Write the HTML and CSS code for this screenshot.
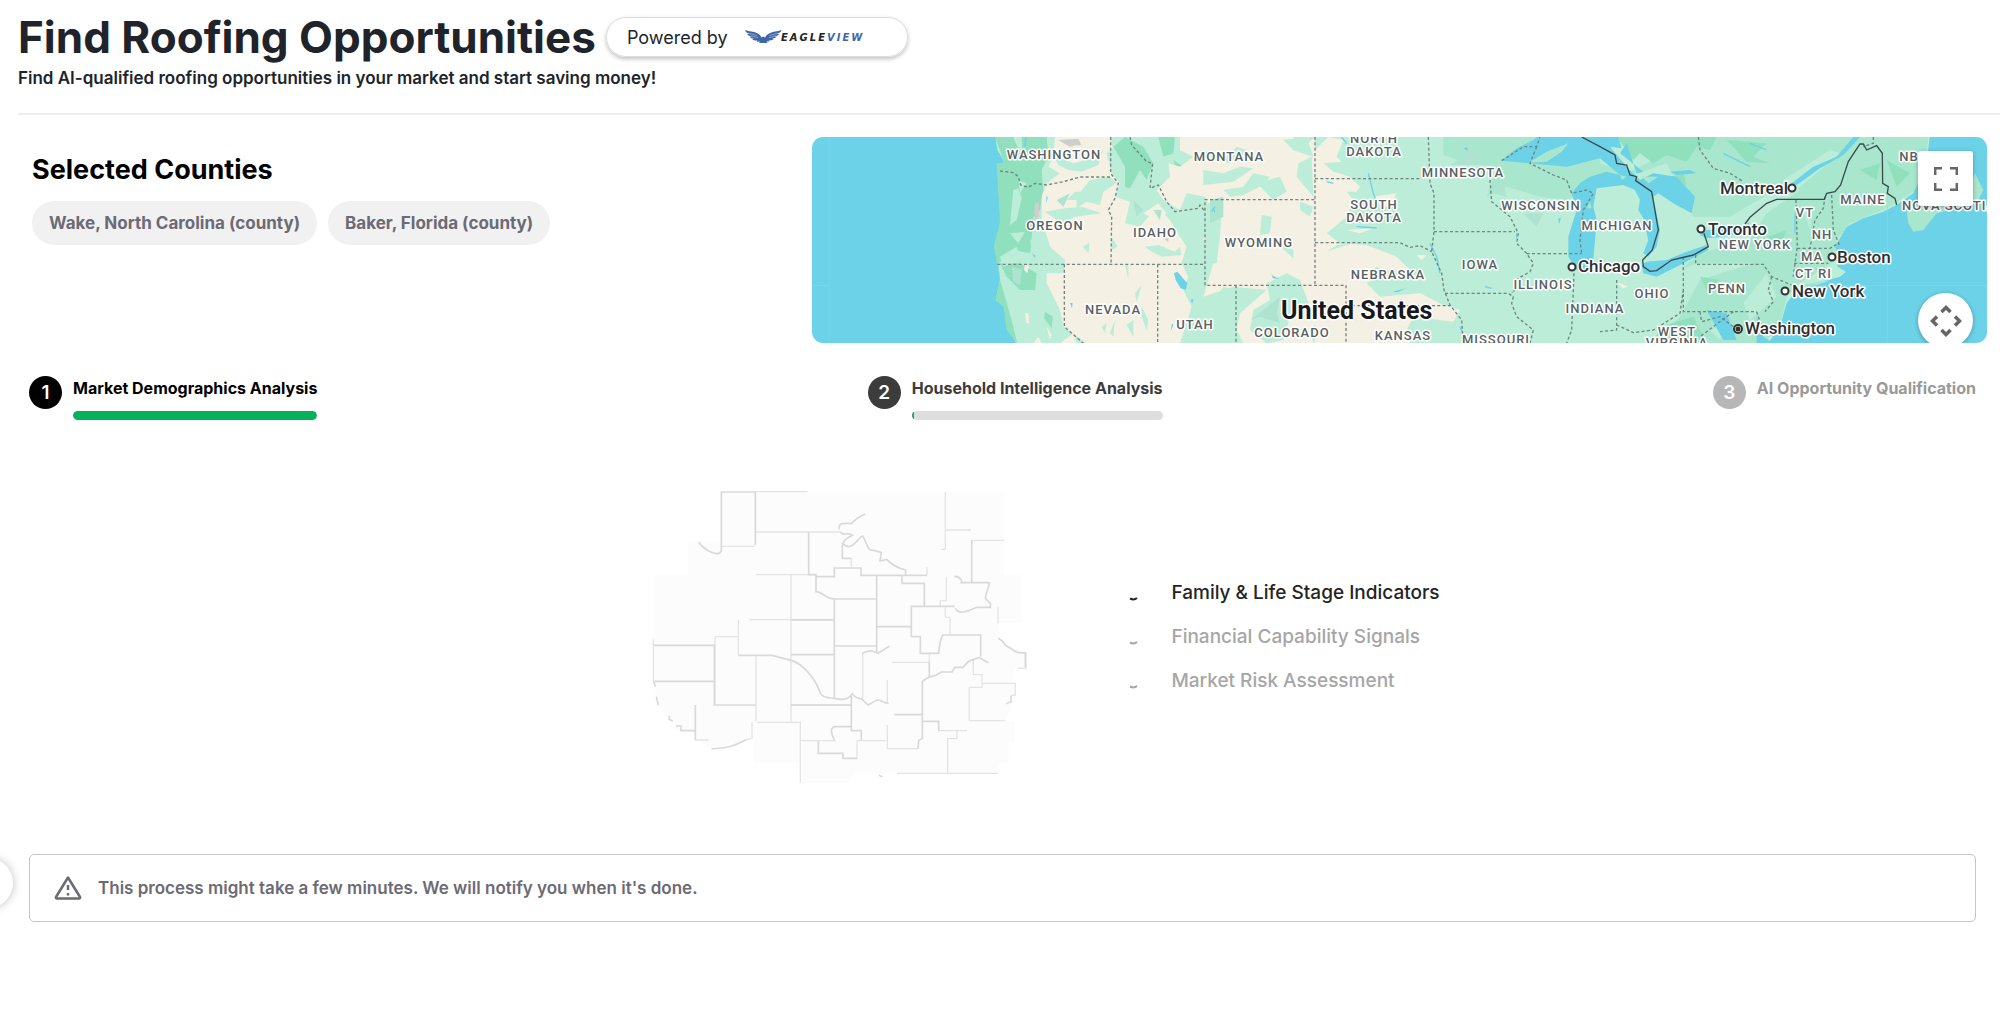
FILE: index.html
```html
<!DOCTYPE html>
<html lang="en">
<head>
<meta charset="utf-8">
<meta name="viewport" content="width=device-width, initial-scale=1">
<title>Find Roofing Opportunities</title>
<link rel="stylesheet" href="styles.css">
</head>
<body>
<header class="page-header">
  <div class="title-row">
    <h1>Find Roofing Opportunities</h1>
    <div class="powered">
      <span>Powered by</span>
      <svg class="logo" viewBox="0 0 134 16" width="134" height="16" role="img" aria-label="EagleView">
        <path fill="#3f67a8" d="M0 1 C4 2.500 9 2.500 13 4.500 Q15.500 6 16.500 8.500 L18 7.500 L20 8.500 Q21 6 24 4.500 C28 2.500 32 2.500 36.500 1 Q36 3.500 32 4.800 L34.500 4.800 Q33 7 29.500 7.400 L32 7.600 Q30 9.500 27 9.600 L29 10 Q26 11.800 23.500 11.500 L24.500 12.500 L21.500 12.500 L22.500 14 H14 L15 12.500 L11.500 12.800 L12.500 11.500 Q9 12 7 10.200 L9.500 9.800 Q6 9.700 4.500 7.800 L7 7.600 Q3.500 7.200 2 5 L4.500 5 Q.5 3.500 0 1Z"/>
        <path stroke="#fff" stroke-width=".4" fill="none" d="M3 4.200l9 2.200M6 7l7 1.500M33.500 4.200l-9 2.200M31 7l-7 1.500"/>
        <text x="36" y="12" class="logo-text">EAGLE<tspan class="logo-view">VIEW</tspan></text>
      </svg>
    </div>
  </div>
  <p>Find AI-qualified roofing opportunities in your market and start saving money!</p>
</header>

<main>
  <section class="overview">
    <div class="counties">
      <h2>Selected Counties</h2>
      <ul class="chips">
        <li>Wake, North Carolina (county)</li>
        <li>Baker, Florida (county)</li>
      </ul>
    </div>
    <div class="map">
      <svg class="map-canvas" viewBox="0 0 1175 206" preserveAspectRatio="xMidYMid slice" role="img" aria-label="Map of the United States">
        <rect width="1175" height="206" fill="#6bd2e8"/>
        <g transform="translate(-12 -7) scale(.33333)">
          <path fill="#bbedd8" d="M585 15L592 60 610 90 600 180 600 280 582 350 595 400 600 450 587 510 612 530 620 590 652 645H2900L2940 590 2960 520 2990 480 3040 462 3120 440 3138 425 3112 410 3115 380 3105 350 3140 290 3190 265 3250 245 3290 225 3340 190 3380 100 3390 15Z"/>
          <!-- Eastern woodland -->
          <path fill="#a8e6cd" d="M1930 21H2400V100L2480 130 2700 21H3385L3375 110 3340 185 3260 235 3150 280 3110 330 3095 400 3000 460 2960 500 2940 590 2890 640H2560L2640 560 2700 450 2860 400 2690 400 2640 420 2700 370 2850 330 2900 250 3000 180 2960 160 2790 260 2680 260 2600 100 2400 170 2300 210 2220 200 2120 170 2060 200 2090 110 2000 100 1930 75Z"/>
          <path fill="#bbedd8" d="M2200 30L2290 21 2240 80ZM2420 190L2500 170 2520 220 2500 265 2410 260ZM2830 520L2900 430 2930 500 2850 570ZM2730 600L2790 580 2760 630ZM3010 240L3040 230 3030 300ZM2950 150L3090 60 3120 70 2990 180Z"/>
          <path fill="#90e0bd" d="M2450 21H2750L2730 60 2690 50 2660 95 2600 75 2560 100 2520 70 2500 90ZM2780 30L2900 40 2860 80 2910 100 2840 95ZM2580 150L2650 130 2660 165ZM3180 120L3240 100 3230 150ZM3260 90L3330 130 3290 170ZM2580 590L2680 560 2720 640H2560ZM2700 440L2760 450 2720 480ZM2900 320L2960 300 2940 350Z"/>
          <!-- Pacific ranges -->
          <path fill="#90e0bd" d="M585 21H640L660 70 650 100 670 130 665 21H740L745 80 725 120 730 180 720 240 700 260 690 370 640 360 610 390 595 400 600 450 615 500 640 590 652 640 620 600 612 530 587 510 600 450 582 350 600 280 600 180 610 90ZM600 400L660 400 710 430 705 480 660 480 620 440ZM735 545L758 560 755 595 732 565ZM940 50L975 21 1030 50 1060 100 1040 150 1020 120 990 175 975 170 975 110ZM1075 21H1125L1120 70 1090 80ZM1120 90L1150 110 1140 150Z"/>
          <path fill="#90e0bd" d="M590 100L670 90 725 120 725 190 700 250 690 370 650 350 595 395 582 350 600 280Z"/>
          <path fill="#bbedd8" d="M640 180L655 175 665 205 650 270 630 285ZM630 310L675 305 655 340ZM690 330L740 350 760 390 700 380ZM600 380L650 350 665 390 610 410ZM655 150L660 190 680 160Z"/>
          <!-- Dry plains and basins -->
          <path fill="#f5f0e4" d="M765 21H930L938 55 920 70 935 130 960 160 945 200 990 215 975 280 1020 290 1070 230 1110 270 1140 320 1160 350 1145 400 1165 440 1150 480 1175 530 1160 580 1140 640H860L790 590 780 540 740 460 740 430 790 430 795 390 750 350 735 300 725 270 725 200 740 160 780 130 745 110 760 80ZM1090 210L1070 180 1110 140 1105 100 1140 110 1180 80 1140 60V21H1480L1500 60 1545 21V640H1330L1310 600 1320 550 1400 480 1300 470 1210 500 1240 400 1210 330 1230 260 1215 200 1160 190 1140 240ZM1545 60L1585 21 1630 30 1610 80 1625 95 1570 100 1600 125 1650 140 1680 170 1670 185 1640 185 1660 210 1640 260 1580 310 1620 340 1700 345 1790 380 1840 430 1760 420 1700 460 1740 500 1860 490 1930 525 1980 540 1960 575 1840 560 1820 600 1830 640H1545ZM1850 375L1880 375 1865 390Z"/>
          <path fill="#bbedd8" d="M760 75l60 25 60-15 30-25-15 45-50 20-40-5-30-15zM830 200l40-50 60-10 20 20-40 25-10 40-40-10-30 20zM735 245l60-10 50-5 60 20-80 10-40 20zM800 210l25-25 50 0-30 25zM848 350l20-12-2 32zM935 320l18 30-18 10zM1035 350l40-5 50 20 15-15 5 25-60 5-30-15zM1200 60l80 20 30-30 30 10-50 40-70-15zM1210 120l60 10 50-20 40 5-60 40-90 10zM1270 180l60-10 30-40 50 10-20 25-60 30-40 5zM1370 160l70-20 20 45-40 25zM1385 255l30 5-5 50-30 5zM1420 330l60 30 0 25zM1450 30l70-9 20 60-60-20zM1495 100l40-20 5 120-50-60zM1500 215l40 15-10 30-30-20zM1215 210l50 40-5 70-10 80-35 0zM1400 460l60-30 40 20 30 80-60 30-20 70-50 10-50-40 10-60 50-30zM1545 580l-15 40 15 20zM1580 365l30-20 50-5-50 15zM1680 440l50-30 80 30-50 20zM975 403l10 5 0 40-8-35zM1005 490l20-25-15 50zM905 590l15-10-5 30zM930 610l15-40-5 50zM980 585l20-15 0 50zM1025 530l20 40-5 30-15-40zM960 530l-15 20 20-5zM1270 470l30 10-20 30-30-10z"/>
          <path fill="#f5f0e4" d="M675 550l10 0 2 30-8 0zM675 400l12 10-5 20-10-10zM740 590l15 25-5 15zM700 640l15-20 10 20zM780 640l40-30 10 30zM1030 250l45-30 25 30-30 20zM1590 150l50 10-20 20zM1720 200l70-10-20 40-30-5zM1640 300l80-5-40 15zM2445 455l40 15-15 5zM1090 175l30 20-10 20z"/>
          <path fill="#ccd0cc" d="M775 30l60-4 10 20-20 0-15 5zM705 220l12-5 0 45-15 10zM1090 325l15 0 0 12z"/>
          <path fill="#aee3cf" d="M635 410l30 10-5 45-20-10zM1440 500l-10 50 10 30-60-20-30 10 40-30zM1230 210l40-10 0 60-40 20zM1960 40l40 35-50 30 80 0 20-30zM2080 190l30-30 10 40zM2170 250l60 0-20 40zM1060 240l25 0-5 30zM1000 210l30 30-20 20zM770 210l40-20-20 40z"/>
          <!-- Lakes and inlets -->
          <path fill="#6bd2e8" d="M2105 92L2150 55 2200 30 2210 21H2455L2465 55 2430 50 2480 110 2520 150 2560 130 2630 140 2685 200 2675 250 2620 220 2575 190 2560 200 2580 300 2570 350 2545 380 2530 370 2545 330 2530 265 2515 240 2520 210 2505 180 2470 165 2390 175 2380 230 2390 270 2380 390 2355 425 2330 420 2305 380 2305 320 2330 240 2315 190 2340 160 2370 140 2420 125 2460 135 2400 85 2300 110 2190 100ZM2525 405L2540 395 2600 390 2660 365 2720 345 2725 360 2640 405 2570 440 2530 430ZM2700 315L2720 300 2830 290 2850 275 2840 300 2790 318 2720 325ZM2975 160L3040 110 3110 80 3160 21H3180L3130 75 3060 115 2990 165ZM675 21l5 0-2 25-6 5zM1122 430l10-5 30 35-5 20-15-5-15-25zM1116 580l4 5-8 18zM810 518l8 2-2 15zM740 195l3 10-5 15zM697 370l10 8-3 6zM1172 510l8-3-3 15zM1408 420l6 15 25 12-20-2zM1240 240l5 0 0 10zM1990 55l12-3 2 12zM1778 485l40-10-25 12zM2275 265l8 0-6 18zM2530 125l-70-55 20-30 30 90zM2610 125l60-5 20 10-60 5zM2720 540l60 10 30 80-40 0zM2870 560l20 60 30 20-50 0z"/>
          <path fill="#a8e6cd" d="M2185 98L2240 65 2305 40 2285 65 2240 95ZM2460 135l20 5-15 10zM2525 140l50 0-30 20zM2360 235l10-20 5 20zM2990 468L3070 452 3090 452 3020 475ZM3320 245L3360 225 3500 200 3525 130 3550 180 3530 220 3410 250 3370 300 3340 305 3325 280Z"/>
          <path stroke="#6bd2e8" stroke-width="4" fill="none" d="M1890 340l20 40 10 50M1705 130l15 60 10 25M1625 21l15 20M2150 310l0 15M2055 470l20 5M2145 480l-10 8M1980 590l8 20M2850 110l-80-40M2900 60l-50-20M2985 250l0 60M1245 230l-10 15M1580 155l20 5M1670 290l60 4"/>
          <path stroke="#87daeb" stroke-width="2" fill="none" d="M87 21V640M36 466H87M3262 230V640M3000 466H3562"/>
          <path class="state-line" d="M600 123L640 128 655 140 662 165 685 172 705 160 740 165 790 155 840 141H935M932 21V130L955 160 945 205 925 240 935 260 933 402M592 403H1213M793 403V590L850 640M1073 403V640M990 21L995 45 1040 95 1058 100 1050 175 1075 165 1100 215 1125 245 1195 235 1200 225 1215 245M1543 209H1215V466H1638V640M1308 466V640M1545 21V466M1545 146H1865M1545 338H1800L1830 352 1860 347 1895 365M1885 21L1890 160 1902 190V305L1895 365 1925 430 1932 480 1950 525 1985 570 1990 640M1902 305H2145M1640 527H1950M1935 490H2125L2140 500 2135 520 2150 560 2200 600 2190 640M2070 150L2075 215 2130 260 2155 310 2150 340 2180 370 2200 400 2190 425 2155 445 2140 490M2180 371H2345M2105 92L2170 50 2210 50 2220 21M2210 50L2190 100 2260 135 2300 150 2315 190 2360 180 2380 190 2350 240 2340 330 2345 371M2322 430L2315 600 2300 640M2450 450V600L2400 605M2650 380V545H2870M2687 375V403H2890L2915 440 2975 465M2915 440L2905 480 2920 515 2895 545M2450 585L2500 608 2560 600 2640 550 2650 480M2700 545L2705 575 2760 560 2800 590M2800 545L2760 575 2700 620M2870 545L2885 590M2988 210L2992 350 2985 400 2980 440M3075 200L3070 235 3045 270 3030 355M2992 355H3090L3115 340M2983 400H3085M3095 195L3100 300 3118 345M2695 21L2700 60 2740 115 2790 130 2830 155M3220 21V40L3190 50"/>
          <path class="country-line" d="M2345 21L2400 50 2445 75 2450 100 2480 105 2490 135 2510 140 2507 152 2555 185 2575 300 2557 360 2528 390 2530 410 2550 424 2570 422 2615 390 2680 375 2725 350 2712 310M2835 282L2850 262 2900 220 2930 208H3073L3080 190 3105 185 3122 165 3145 95 3180 42 3190 42 3200 60 3230 47 3247 70 3248 160 3265 170 3262 190 3285 205 3290 225"/>
        </g>
        <g class="state-label">
          <text x="242" y="22">WASHINGTON</text><text x="243" y="93">OREGON</text><text x="343" y="100">IDAHO</text>
          <text x="417" y="24">MONTANA</text><text x="562" y="6">NORTH</text><text x="562" y="19">DAKOTA</text>
          <text x="562" y="72">SOUTH</text><text x="562" y="85">DAKOTA</text><text x="447" y="110">WYOMING</text>
          <text x="301" y="177">NEVADA</text><text x="383" y="192">UTAH</text><text x="480" y="200">COLORADO</text>
          <text x="576" y="142">NEBRASKA</text><text x="591" y="203">KANSAS</text><text x="651" y="40">MINNESOTA</text>
          <text x="729" y="73">WISCONSIN</text><text x="668" y="132">IOWA</text><text x="731" y="152">ILLINOIS</text>
          <text x="684" y="207">MISSOURI</text><text x="805" y="93">MICHIGAN</text><text x="783" y="176">INDIANA</text>
          <text x="840" y="161">OHIO</text><text x="915" y="156">PENN</text><text x="865" y="199">WEST</text>
          <text x="865" y="210">VIRGINIA</text><text x="943" y="112">NEW YORK</text><text x="993" y="80">VT</text>
          <text x="1010" y="102">NH</text><text x="1000" y="124">MA</text><text x="992" y="141">CT</text>
          <text x="1013" y="141">RI</text><text x="1051" y="67">MAINE</text><text x="1097" y="24">NB</text>
          <text x="1137" y="73">NOVA SCOTIA</text>
        </g>
        <g class="city-label">
          <text x="908" y="57">Montreal</text><text x="896" y="98">Toronto</text><text x="766" y="135">Chicago</text>
          <text x="1025" y="126">Boston</text><text x="980" y="160">New York</text><text x="933" y="197">Washington</text>
        </g>
        <g class="city-dot">
          <circle cx="980" cy="51" r="3.500"/><circle cx="889" cy="92" r="3.500"/><circle cx="760" cy="130" r="3.500"/>
          <circle cx="1020" cy="120" r="3.500"/><circle cx="973" cy="154" r="3.500"/><circle cx="926" cy="192" r="4"/>
          <circle cx="926" cy="192" r="1.500" fill="#202124"/>
        </g>
        <text class="country-label" x="469" y="182">United States</text>
      </svg>
      <button class="map-fullscreen" type="button" aria-label="Toggle fullscreen view">
        <svg viewBox="0 0 24 24" width="24" height="24"><path fill="none" stroke="#666" stroke-width="2.500" d="M1.200 8V1.200H8M16 1.200h6.800V8M22.800 16v6.800H16M8 22.800H1.200V16"/></svg>
      </button>
      <button class="map-camera" type="button" aria-label="Map camera controls">
        <svg viewBox="0 0 32 32" width="32" height="32"><path fill="none" stroke="#666" stroke-width="3.500" d="M11.500 7L16 2.500l4.500 4.500M11.500 25L16 29.500l4.500-4.500M7 11.500L2.500 16l4.500 4.500M25 11.500L29.500 16l-4.500 4.500"/></svg>
      </button>
    </div>
  </section>

  <ol class="steps">
    <li class="step done">
      <span class="step-number">1</span>
      <div class="step-body"><label for="step-1">Market Demographics Analysis</label><progress id="step-1" max="100" value="100"></progress></div>
    </li>
    <li class="step active">
      <span class="step-number">2</span>
      <div class="step-body"><label for="step-2">Household Intelligence Analysis</label><progress id="step-2" max="100" value="1"></progress></div>
    </li>
    <li class="step pending">
      <span class="step-number">3</span>
      <div class="step-body"><span>AI Opportunity Qualification</span></div>
    </li>
  </ol>

  <section class="analysis">
    <svg class="county-map" viewBox="40 30 1125 880" role="img" aria-label="County outlines">
      <path fill="#fcfcfc" d="M248 35H1095V285H1150V428H1080V480L1162 520V565H1125V610L1130 650 1100 725H1128V790H1110V850H1080V880H650L625 908H485V850H345V780L220 806 170 780V752H112L60 680 44 600V285H148V187H248Z"/>
      <g fill="none" stroke="#e4e4e4" stroke-width="4">
        <path d="M350 35H507M350 156H607M248 199H348M352 284H530M332 419H587M457 284V725M352 527V725M299 420V470H229M229 472V675M299 470V526M457 675H637M355 727H485V908M340 727V775L322 779M170 780H210M485 782H590M655 782H740M655 782V835H615M672 518V655M746 600V670M746 735V806H838M760 547H872M920 150H997M1000 181H1097M920 36V208H908M923 290V362H905V377M934 412V464M920 380V412H934M1078 382V430M1004 540V584H1030V622H992V722H1100M1030 610H1130V645L1117 647M900 752H985M955 752V776H927V880M775 880H1078M44 478V605M1138 565H1162V520M638 235V262M865 262V285M872 520V585"/>
      </g>
      <g fill="none" stroke="#d9d9d9" stroke-width="5">
        <path d="M248 215V36H350V196M510 156V284H532V335C550 335 560 355 587 357H712M532 290H587V264H667V286H865M714 287V520M587 357V655M587 498H714M457 420H587M457 524H587M714 440H818M790 288V310H857V378M818 470V379H948M818 470H845V520H900Q905 470 914 465H1026V530M44 496H227V604H44M227 604V675H350M170 675V780M170 752H127V738H112M299 526H400L457 541C500 552 535 610 542 632C548 655 570 652 590 656C615 660 628 660 641 641Q650 655 668 656L688 675C700 670 710 660 718 660S735 670 750 670M457 675H637M638 645V752H668V782M637 740H590C570 742 580 765 588 782M539 783V820H613V835H655M672 520C690 510 700 510 718 520L752 499M767 704H851M851 704V605C865 590 880 590 893 585L908 576H940L948 562H973C985 550 985 542 1005 538L1022 533 1049 548M851 700V775L840 782 838 806M851 724H900V752M999 307V181M965 308H1052C1052 325 1035 345 1042 358L1055 370V382H1015C985 395 960 405 950 385M947 289Q968 290 970 307M180 186C200 215 240 230 247 214M218 806C270 808 300 790 322 779M601 148C600 125 620 130 638 131C650 118 665 108 680 102M607 156C610 170 630 155 642 166C610 180 605 195 630 200C650 200 660 170 672 168C684 185 685 215 705 211L728 217 724 243 744 238C760 255 780 265 801 270V284M611 190V235H638M1079 475C1100 485 1095 500 1117 505C1130 520 1145 520 1160 518V562M1117 647V665L1103 671M45 605L50 620M53 650L59 676M92 708V718L102 723M720 885L731 891M872 545V590"/>
      </g>
    </svg>
    <ul class="signals">
      <li class="current"><svg viewBox="0 0 10 20" width="10" height="20"><path d="M1 15.500q4 2 7-.5"/></svg>Family &amp; Life Stage Indicators</li>
      <li><svg viewBox="0 0 10 20" width="10" height="20"><path d="M1 15.500q4 2 7-.5"/></svg>Financial Capability Signals</li>
      <li><svg viewBox="0 0 10 20" width="10" height="20"><path d="M1 15.500q4 2 7-.5"/></svg>Market Risk Assessment</li>
    </ul>
  </section>

  <div class="notice" role="status">
    <svg viewBox="0 0 28 26" width="28" height="26" fill="none" stroke="#6b6a75" stroke-width="2.500" stroke-linejoin="round"><path d="M14 2.500L26 22q.5 1.500-1 1.500H3q-1.500 0-1-1.500Z"/><path d="M14 10v5M14 18v2.500"/></svg>
    <p>This process might take a few minutes. We will notify you when it's done.</p>
    <button class="drawer-handle" type="button" aria-label="Open side panel"></button>
  </div>
</main>
</body>
</html>
```
FILE: styles.css
```css
* { box-sizing: border-box; }

body {
  margin: 0;
  overflow-x: hidden;
  background: #fff;
  color: #20242a;
  font-family: Inter, "Liberation Sans", sans-serif;
}

h1, h2, p, ul, ol { margin: 0; padding: 0; }
ul, ol { list-style: none; }

.page-header {
  margin-left: 18px;
  padding: 13px 0 23px;
  border-bottom: 2px solid #eee;
}

.title-row {
  display: flex;
  align-items: center;
  gap: 10px;
}

h1 {
  font-size: 44px;
  line-height: 48px;
  font-weight: 700;
}

.page-header p {
  margin-top: 5px;
  font-size: 17px;
  line-height: 24px;
  font-weight: 600;
}

.powered {
  display: flex;
  align-items: center;
  gap: 17px;
  height: 40px;
  padding: 0 28px 0 20px;
  border: 1px solid #ddd;
  border-radius: 20px;
  box-shadow: 0 2px 4px rgba(0, 0, 0, .25);
  font-size: 18px;
}

.logo-text {
  fill: #222;
  font: italic 700 10px "DejaVu Sans", "Liberation Sans", sans-serif;
  letter-spacing: 2px;
}

.logo-view { fill: #3f67a8; }

.overview {
  display: grid;
  grid-template-columns: 780fr 1175fr;
  padding: 22px 13px 0 32px;
}

.counties { padding-top: 17px; }

h2 {
  color: #000;
  font-size: 27px;
  line-height: 32px;
  font-weight: 700;
}

.chips {
  display: flex;
  flex-wrap: wrap;
  gap: 11px;
  margin-top: 15px;
}

.chips li {
  padding: 0 17px;
  border-radius: 22px;
  background: #f1f1f1;
  color: #6b6a75;
  font-size: 17px;
  line-height: 44px;
  font-weight: 700;
}

.map {
  position: relative;
  height: 206px;
  overflow: hidden;
  border-radius: 11px;
}

.map-canvas {
  display: block;
  width: 100%;
  height: 100%;
}

.state-line {
  fill: none;
  stroke: #6f8580;
  stroke-width: 4;
  stroke-dasharray: 9 7;
}

.country-line {
  fill: none;
  stroke: #3c4a4c;
  stroke-width: 4;
}

.state-label, .city-label, .country-label {
  font-family: Roboto, sans-serif;
  font-weight: 500;
  paint-order: stroke;
  stroke: #fff;
  stroke-width: 3px;
  stroke-linejoin: round;
}

.state-label {
  fill: #5a5f63;
  font-size: 13px;
  letter-spacing: 1px;
  text-anchor: middle;
}

.city-label {
  fill: #2c3033;
  font-size: 17px;
}

.country-label {
  fill: #17191b;
  font-size: 25px;
  font-weight: 700;
}

.city-dot {
  fill: #fff;
  stroke: #333;
  stroke-width: 2px;
}

.map-fullscreen, .map-camera {
  position: absolute;
  right: 14px;
  display: grid;
  place-items: center;
  width: 55px;
  height: 55px;
  padding: 0;
  border: 0;
  background: #fff;
  box-shadow: 0 1px 4px rgba(0, 0, 0, .3);
}

.map-fullscreen { top: 14px; border-radius: 3px; }
.map-camera { bottom: -5px; border-radius: 50%; }

.steps {
  display: flex;
  justify-content: space-between;
  margin: 33px 24px 0 29px;
}

.step {
  display: flex;
  align-items: flex-start;
  gap: 11px;
  font-size: 16px;
  line-height: 24px;
  font-weight: 700;
}

.step-number {
  width: 33px;
  border-radius: 50%;
  background: #000;
  color: #fff;
  font-size: 19px;
  line-height: 33px;
  font-weight: 600;
  text-align: center;
}

.step-body {
  display: flex;
  flex-direction: column;
  gap: 11px;
}

.step progress {
  appearance: none;
  display: block;
  width: 100%;
  height: 9px;
  overflow: hidden;
  border: 0;
  border-radius: 5px;
  background: #dedede;
}

.step progress::-webkit-progress-bar { background: #dedede; }
.step progress::-webkit-progress-value { border-radius: 5px; background: #06b15c; }

.done { color: #000; }
.active { color: #3c3c3c; }
.active .step-number { background: #3c3c3c; }
.pending { color: #999; }
.pending .step-number { background: #b7b7b7; }

.analysis {
  display: flex;
  align-items: center;
  justify-content: center;
  gap: 102px;
  padding: 70px 0 71px 92px;
}

.county-map { width: 375px; }

.signals {
  display: flex;
  flex-direction: column;
  gap: 20px;
  color: #a6a6a6;
  font-size: 19px;
  line-height: 24px;
  font-weight: 500;
}

.signals li {
  display: flex;
  align-items: center;
  gap: 32px;
}

.signals svg {
  fill: none;
  stroke: currentColor;
  stroke-width: 2px;
}

.signals .current { color: #242424; }

.notice {
  position: relative;
  display: flex;
  align-items: center;
  gap: 16px;
  margin: 0 24px 0 29px;
  padding: 20px 24px;
  border: 1px solid #c6c6c9;
  border-radius: 5px;
  color: #6b6a75;
  font-size: 17px;
  line-height: 26px;
  font-weight: 600;
}

.drawer-handle {
  position: absolute;
  top: 3px;
  left: -67px;
  width: 50px;
  height: 50px;
  border: 0;
  border-radius: 50%;
  background: #fff;
  box-shadow: 0 0 10px rgba(0, 0, 0, .25);
}
```
